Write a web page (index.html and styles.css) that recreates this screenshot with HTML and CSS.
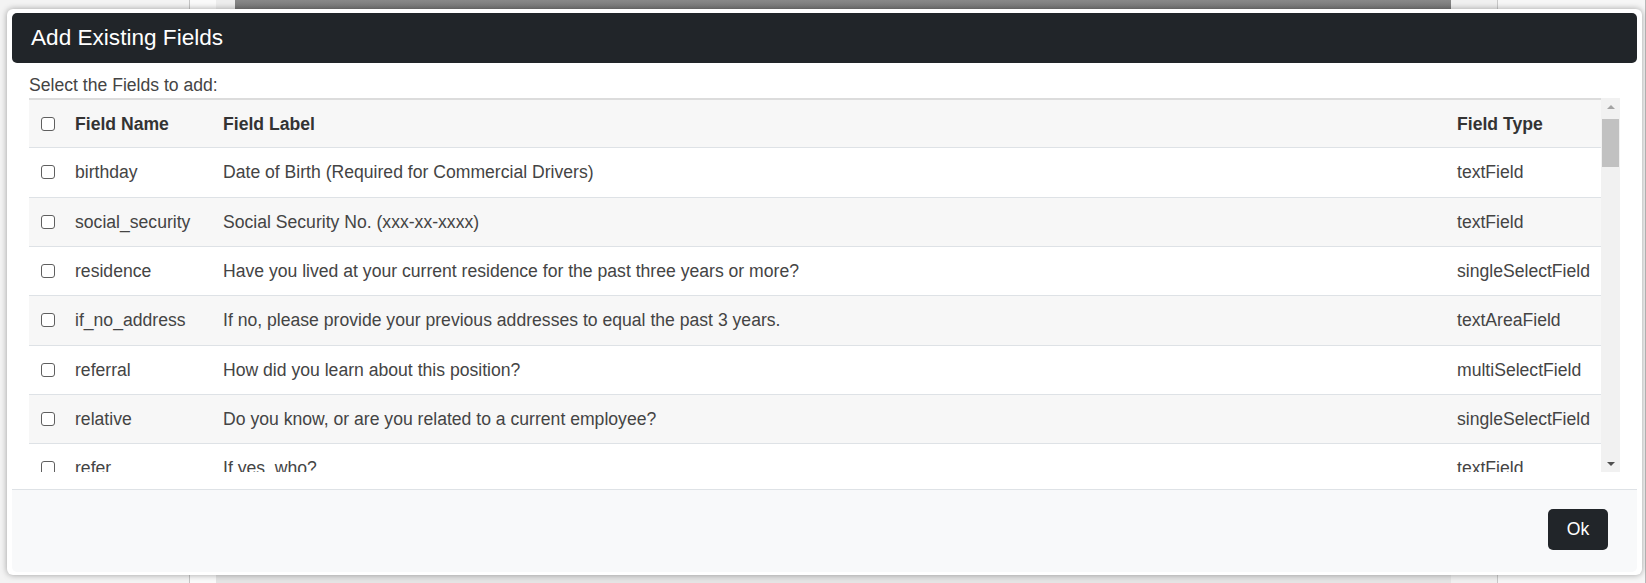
FILE: index.html
```html
<!DOCTYPE html>
<html lang="en">
<head>
    <meta charset="UTF-8">
    <meta name="viewport" content="width=device-width, initial-scale=1.0">
    <title>Add Existing Fields</title>
    <link rel="stylesheet" href="styles.css">
</head>
<body>
    <div class="page">
        <div class="pane-left"></div>
        <div class="pane-gap"></div>
        <div class="pane-center">
            <div class="center-top">
                <div class="center-tab"></div>
                <div class="center-bar"></div>
            </div>
        </div>
        <div class="pane-side"></div>
        <div class="pane-right"></div>
    </div>

    <div class="modal">
        <div class="modal-header">
            <h5 class="modal-title">Add Existing Fields</h5>
        </div>
        <div class="modal-body">
            <div class="intro">Select the Fields to add:</div>
            <div class="scroll-box">
                <div class="table-wrap">
                    <table class="fields">
                        <colgroup>
                            <col class="col-check">
                            <col class="col-name">
                            <col>
                            <col class="col-type">
                        </colgroup>
                        <thead>
                            <tr>
                                <th><input type="checkbox"></th>
                                <th>Field Name</th>
                                <th>Field Label</th>
                                <th>Field Type</th>
                            </tr>
                        </thead>
                        <tbody>
                            <tr>
                                <td><input type="checkbox"></td>
                                <td>birthday</td>
                                <td>Date of Birth (Required for Commercial Drivers)</td>
                                <td>textField</td>
                            </tr>
                            <tr>
                                <td><input type="checkbox"></td>
                                <td>social_security</td>
                                <td>Social Security No. (xxx-xx-xxxx)</td>
                                <td>textField</td>
                            </tr>
                            <tr>
                                <td><input type="checkbox"></td>
                                <td>residence</td>
                                <td>Have you lived at your current residence for the past three years or more?</td>
                                <td>singleSelectField</td>
                            </tr>
                            <tr>
                                <td><input type="checkbox"></td>
                                <td>if_no_address</td>
                                <td>If no, please provide your previous addresses to equal the past 3 years.</td>
                                <td>textAreaField</td>
                            </tr>
                            <tr>
                                <td><input type="checkbox"></td>
                                <td>referral</td>
                                <td>How did you learn about this position?</td>
                                <td>multiSelectField</td>
                            </tr>
                            <tr>
                                <td><input type="checkbox"></td>
                                <td>relative</td>
                                <td>Do you know, or are you related to a current employee?</td>
                                <td>singleSelectField</td>
                            </tr>
                            <tr>
                                <td><input type="checkbox"></td>
                                <td>refer</td>
                                <td>If yes, who?</td>
                                <td>textField</td>
                            </tr>
                            <tr>
                                <td><input type="checkbox"></td>
                                <td>employer</td>
                                <td>Current Employer</td>
                                <td>textField</td>
                            </tr>
                        </tbody>
                    </table>
                </div>
                <div class="scrollbar">
                    <div class="sb-btn"><span class="arrow-up"></span></div>
                    <div class="sb-track"><div class="sb-thumb"></div></div>
                    <div class="sb-btn"><span class="arrow-down"></span></div>
                </div>
            </div>
        </div>
        <div class="modal-footer">
            <button class="btn-ok">Ok</button>
        </div>
    </div>
</body>
</html>
```

FILE: styles.css
```css
body {
    margin: 0;
    font-family: "Liberation Sans", Arial, sans-serif;
    font-size: 17.6px;
    line-height: 1.5;
    color: #444;
    background: #f3f3f3;
    overflow: hidden;
}
.page {
    display: flex;
    height: 583px;
}
.pane-left {
    width: 189px;
    background: #f3f3f3;
    border-right: 1px solid #c4c4c4;
}
.pane-gap {
    width: 26px;
    background: #fafafa;
}
.pane-center {
    width: 1235px;
    background: #e4e4e4;
}
.center-top {
    display: flex;
    height: 9px;
}
.center-tab {
    width: 19px;
    background: #ededed;
}
.center-bar {
    flex: 1;
    background: linear-gradient(#888, #777);
}
.pane-side {
    width: 46px;
    background: #f0f0f0;
    border-right: 1px solid #c8c8c8;
}
.pane-right {
    flex: 1;
    background: #f6f6f6;
    border-right: 1px solid #b8b8b8;
}

.modal {
    position: absolute;
    left: 7px;
    top: 9px;
    width: 1635px;
    box-sizing: border-box;
    padding: 4px 5px 3px;
    background: #fff;
    border-radius: 6px;
    box-shadow: 0 0 6px rgba(0,0,0,0.35);
}
.modal-header {
    height: 50px;
    display: flex;
    align-items: center;
    padding: 0 19px;
    background: #212529;
    border-radius: 5px;
}
.modal-title {
    margin: 0;
    font-size: 22.6px;
    font-weight: normal;
    line-height: 1.2;
    color: #fff;
}
.modal-body {
    padding: 9px 17px 17px;
}
.intro {
    color: #444;
    line-height: 26px;
}
.scroll-box {
    display: flex;
    height: 374px;
}
.table-wrap {
    flex: 1;
    overflow: hidden;
}
.fields {
    width: 100%;
    border-collapse: collapse;
    table-layout: fixed;
    border-top: 2px solid #dcdcdc;
}
.col-check { width: 35px; }
.col-name { width: 148px; }
.col-type { width: 155px; }
.fields th,
.fields td {
    padding: 11px;
    line-height: 26.33px;
    text-align: left;
    white-space: nowrap;
    vertical-align: middle;
    border-bottom: 1px solid #dee2e6;
}
.fields th {
    padding: 10.5px 11px;
    font-weight: bold;
    color: #333;
}
.fields thead tr {
    background: #f7f7f7;
}
.fields tbody tr:nth-child(even) {
    background: #f7f7f7;
}
.fields input[type="checkbox"] {
    appearance: none;
    -webkit-appearance: none;
    display: block;
    width: 14px;
    height: 14px;
    margin: 0 0 0 0.5px;
    box-sizing: border-box;
    border: 1px solid #5f5f5f;
    border-radius: 3px;
    background: #fff;
}

.scrollbar {
    width: 19px;
    display: flex;
    flex-direction: column;
    background: #f1f1f1;
}
.sb-btn {
    height: 17px;
    display: flex;
    align-items: center;
    justify-content: center;
}
.arrow-up {
    border-left: 4px solid transparent;
    border-right: 4px solid transparent;
    border-bottom: 4px solid #a3a3a3;
}
.arrow-down {
    border-left: 4px solid transparent;
    border-right: 4px solid transparent;
    border-top: 4px solid #505050;
}
.sb-track {
    flex: 1;
    padding: 4px 1px 0;
}
.sb-thumb {
    height: 48px;
    background: #c1c1c1;
}

.modal-footer {
    display: flex;
    justify-content: flex-end;
    padding: 19px 29px 22px;
    background: #f8f9fa;
    border-top: 1px solid #dee2e6;
    border-radius: 0 0 5px 5px;
}
.btn-ok {
    width: 60px;
    height: 41px;
    padding: 0;
    font-family: inherit;
    font-size: 17.6px;
    color: #fff;
    background: #212529;
    border: none;
    border-radius: 5px;
    cursor: pointer;
}
```
